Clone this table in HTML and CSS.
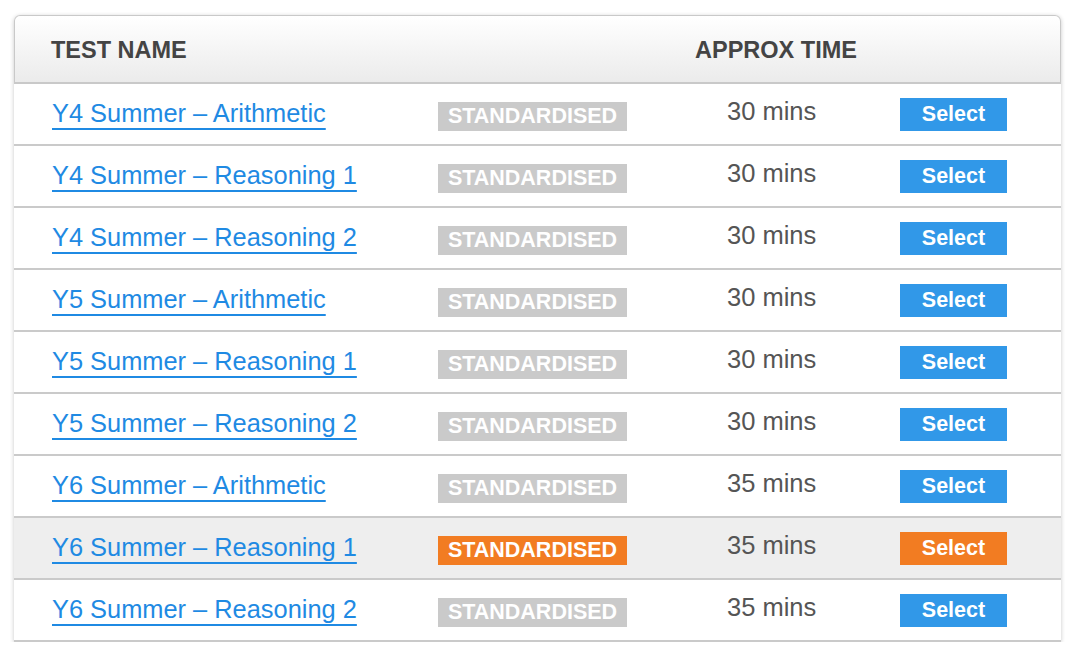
FILE: index.html
```html
<!DOCTYPE html>
<html>
<head>
<meta charset="utf-8">
<link rel="stylesheet" href="styles.css">
</head>
<body>
<div class="card">
  <div class="head">
    <div class="h-name">TEST NAME</div>
    <div class="h-time">APPROX TIME</div>
  </div>
  <div class="row"><a class="name" href="#">Y4 Summer – Arithmetic</a><span class="badge">STANDARDISED</span><span class="time">30 mins</span><span class="btn">Select</span></div>
  <div class="row"><a class="name" href="#">Y4 Summer – Reasoning 1</a><span class="badge">STANDARDISED</span><span class="time">30 mins</span><span class="btn">Select</span></div>
  <div class="row"><a class="name" href="#">Y4 Summer – Reasoning 2</a><span class="badge">STANDARDISED</span><span class="time">30 mins</span><span class="btn">Select</span></div>
  <div class="row"><a class="name" href="#">Y5 Summer – Arithmetic</a><span class="badge">STANDARDISED</span><span class="time">30 mins</span><span class="btn">Select</span></div>
  <div class="row"><a class="name" href="#">Y5 Summer – Reasoning 1</a><span class="badge">STANDARDISED</span><span class="time">30 mins</span><span class="btn">Select</span></div>
  <div class="row"><a class="name" href="#">Y5 Summer – Reasoning 2</a><span class="badge">STANDARDISED</span><span class="time">30 mins</span><span class="btn">Select</span></div>
  <div class="row"><a class="name" href="#">Y6 Summer – Arithmetic</a><span class="badge">STANDARDISED</span><span class="time">35 mins</span><span class="btn">Select</span></div>
  <div class="row active"><a class="name" href="#">Y6 Summer – Reasoning 1</a><span class="badge">STANDARDISED</span><span class="time">35 mins</span><span class="btn">Select</span></div>
  <div class="row"><a class="name" href="#">Y6 Summer – Reasoning 2</a><span class="badge">STANDARDISED</span><span class="time">35 mins</span><span class="btn">Select</span></div>
</div>
</body>
</html>
```
FILE: styles.css
```css
html, body {
  margin: 0;
  padding: 0;
  background: #ffffff;
}
body {
  padding: 15px 15px 0 14px;
  font-family: "Liberation Sans", Arial, Helvetica, sans-serif;
}
.card {
  width: 1047px;
  background: #fff;
  border-radius: 6px 6px 0 0;
  box-shadow: 0 1px 4px rgba(0, 0, 0, 0.22);
}
.head {
  height: 66px;
  display: flex;
  align-items: center;
  border: 1px solid #c9c9c9;
  border-bottom: 2px solid #c9c9c9;
  border-radius: 6px 6px 0 0;
  background: linear-gradient(#ffffff, #ebebeb);
  color: #444;
  font-weight: bold;
  font-size: 23.5px;
}
.h-name {
  width: 644px;
  padding-left: 36px;
  padding-top: 2px;
}
.h-time {
  padding-top: 2px;
}
.row {
  height: 60px;
  border-bottom: 2px solid #cacaca;
  display: flex;
  align-items: center;
  padding-left: 38px;
}
.row.active {
  background: #eeeeee;
}
.name {
  width: 386px;
  color: #1f8ae3;
  font-size: 25.4px;
  text-decoration: underline;
  text-decoration-thickness: 1.5px;
  text-underline-offset: 6px;
  margin-top: -2px;
}
.badge {
  width: 189px;
  height: 29px;
  box-sizing: border-box;
  background: #cacaca;
  color: #fff;
  font-weight: bold;
  font-size: 21.5px;
  line-height: 29px;
  text-align: center;
  margin-top: 4px;
}
.active .badge, .active .btn {
  background: #f27c22;
}
.time {
  margin-left: 100px;
  width: 173px;
  color: #555;
  font-size: 25.5px;
  margin-top: -6px;
}
.btn {
  width: 107px;
  height: 33px;
  background: #3198e8;
  color: #fff;
  font-weight: bold;
  font-size: 21.5px;
  line-height: 32px;
  text-align: center;
  margin-top: 0px;
}
```
